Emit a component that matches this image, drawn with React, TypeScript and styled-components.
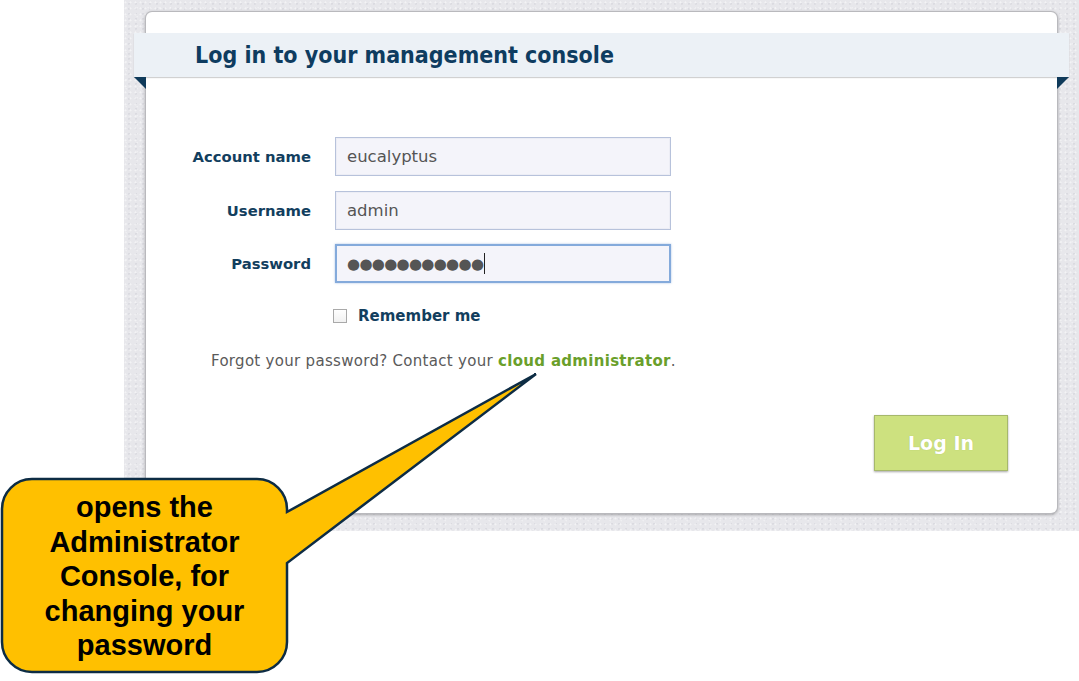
import React from "react";
import styled, { createGlobalStyle } from "styled-components";

const GlobalStyle = createGlobalStyle`
  html, body { margin: 0; padding: 0; background: #ffffff; }
  body { width: 1079px; height: 681px; overflow: hidden; font-family: "DejaVu Sans", "Liberation Sans", sans-serif; }
`;

const Page = styled.div`
  position: relative;
  width: 1079px;
  height: 681px;
  background: #ffffff;
`;

const Backdrop = styled.div`
  margin-left: 124px;
  width: 955px;
  height: 531px;
  box-sizing: border-box;
  padding: 12px 22px 0 22px;
  background-color: #e7e7eb;
  background-image:
    radial-gradient(circle at 30% 40%, rgba(255,255,255,0.5) 0.7px, transparent 1.3px),
    radial-gradient(circle at 70% 75%, rgba(190,190,200,0.3) 0.7px, transparent 1.3px),
    radial-gradient(circle at 20% 85%, rgba(255,255,255,0.35) 0.5px, transparent 1.1px);
  background-size: 5px 6px, 7px 5px, 11px 9px;
`;

const Card = styled.div`
  position: relative;
  height: 501px;
  background: #ffffff;
  border-radius: 6px;
  box-shadow: 0 0 0 1px #b9b9bd, 0 1px 3px 1px rgba(0, 0, 0, 0.28);
  display: flex;
  flex-direction: column;
`;

const TitleBand = styled.div`
  position: relative;
  margin: 21px -12px 0 -12px;
  height: 44px;
  background: #ecf1f6;
  box-shadow: 0 1px 1px rgba(0, 0, 0, 0.18);
  display: flex;
  align-items: center;
  padding-left: 61px;

  &::before,
  &::after {
    content: "";
    position: absolute;
    top: 44px;
    width: 0;
    height: 0;
    border-top: 12px solid #0f3a5a;
  }
  &::before {
    left: 0;
    border-left: 12px solid transparent;
  }
  &::after {
    right: 0;
    border-right: 12px solid transparent;
  }
`;

const Title = styled.h1`
  margin: 0;
  font-family: "DejaVu Sans", sans-serif;
  font-stretch: condensed;
  font-weight: bold;
  font-size: 23px;
  color: #0e3c60;
`;

const FormGrid = styled.div`
  margin-top: 60px;
  display: grid;
  grid-template-columns: 165px 336px;
  grid-template-rows: 39px 39px 39px auto;
  column-gap: 24px;
  row-gap: 14.5px;
`;

const Label = styled.label`
  display: flex;
  align-items: center;
  justify-content: flex-end;
  font-family: "DejaVu Sans", sans-serif;
  font-weight: bold;
  font-size: 14.8px;
  color: #123e5e;
`;

const Field = styled.div<{ $focused?: boolean }>`
  box-sizing: border-box;
  display: flex;
  align-items: center;
  padding-left: ${(p) => (p.$focused ? "10px" : "11px")};
  background: #f4f4fa;
  border: ${(p) => (p.$focused ? "2px solid #84aadb" : "1px solid #b7c2db")};
  box-shadow: ${(p) =>
    p.$focused ? "0 0 2px rgba(110,150,210,0.6)" : "inset 0 0 0 1px #ecedf5"};
  font-family: "DejaVu Sans", sans-serif;
  font-size: 16.5px;
  color: #555555;
`;

const Dots = styled.span`
  font-size: 15px;
  letter-spacing: -0.7px;
  color: #555555;
`;

const Caret = styled.span`
  display: inline-block;
  width: 1px;
  height: 21px;
  background: #222;
  margin-left: 1px;
`;

const RememberRow = styled.div`
  grid-column: 2;
  height: 18px;
  margin-top: 9.5px;
  margin-left: -2px;
  display: flex;
  align-items: center;
  gap: 11px;
`;

const Checkbox = styled.span`
  box-sizing: border-box;
  width: 14px;
  height: 14px;
  border: 1px solid #a9a9a9;
  background: linear-gradient(#ffffff, #f1f1f1);
`;

const RememberText = styled.span`
  font-family: "DejaVu Sans", sans-serif;
  font-weight: bold;
  font-size: 15px;
  color: #123e5e;
`;

const Forgot = styled.p`
  margin: 27px 0 0 65px;
  line-height: 18px;
  font-family: "DejaVu Sans", sans-serif;
  font-size: 15px;
  letter-spacing: 0.3px;
  color: #5a5a5a;
`;

const AdminLink = styled.a`
  color: #6a9f2b;
  font-weight: bold;
  text-decoration: none;
`;

const LoginButton = styled.button`
  align-self: flex-end;
  margin: 45px 49px 0 0;
  width: 134px;
  height: 56px;
  background: #cde17f;
  border: 1px solid #a6b86c;
  box-shadow: 0 1px 2px rgba(0, 0, 0, 0.35);
  color: #ffffff;
  font-family: "DejaVu Sans", sans-serif;
  font-weight: bold;
  font-size: 19px;
  text-shadow: 0 0 1px rgba(120, 140, 60, 0.4);
  cursor: pointer;
`;

const CalloutShape = styled.svg`
  position: absolute;
  left: 0;
  top: 360px;
  width: 545px;
  height: 321px;
`;

const CalloutText = styled.div`
  position: absolute;
  left: 2px;
  top: 479px;
  width: 285px;
  height: 193px;
  box-sizing: border-box;
  padding-top: 2px;
  display: flex;
  align-items: center;
  justify-content: center;
  text-align: center;
  font-family: "Liberation Sans", Arial, sans-serif;
  font-weight: bold;
  font-size: 29px;
  line-height: 34.5px;
  color: #000000;
`;

export default function App() {
  return (
    <Page>
      <GlobalStyle />
      <Backdrop>
        <Card>
          <TitleBand>
            <Title>Log in to your management console</Title>
          </TitleBand>
          <FormGrid>
            <Label>Account name</Label>
            <Field>eucalyptus</Field>
            <Label>Username</Label>
            <Field>admin</Field>
            <Label>Password</Label>
            <Field $focused>
              <Dots>●●●●●●●●●●●</Dots>
              <Caret />
            </Field>
            <RememberRow>
              <Checkbox />
              <RememberText>Remember me</RememberText>
            </RememberRow>
          </FormGrid>
          <Forgot>
            Forgot your password? Contact your{" "}
            <AdminLink href="#">cloud administrator</AdminLink>.
          </Forgot>
          <LoginButton>Log In</LoginButton>
        </Card>
      </Backdrop>
      <CalloutShape viewBox="0 360 545 321">
        <path
          d="M 32 479 H 257 A 30 30 0 0 1 287 509 L 287 512 L 536 374 L 287 563 V 642 A 30 30 0 0 1 257 672 H 32 A 30 30 0 0 1 2 642 V 509 A 30 30 0 0 1 32 479 Z"
          fill="#ffc000"
          stroke="#0d2c44"
          strokeWidth="2.5"
          strokeLinejoin="miter"
        />
      </CalloutShape>
      <CalloutText>
        opens the
        <br />
        Administrator
        <br />
        Console, for
        <br />
        changing your
        <br />
        password
      </CalloutText>
    </Page>
  );
}
